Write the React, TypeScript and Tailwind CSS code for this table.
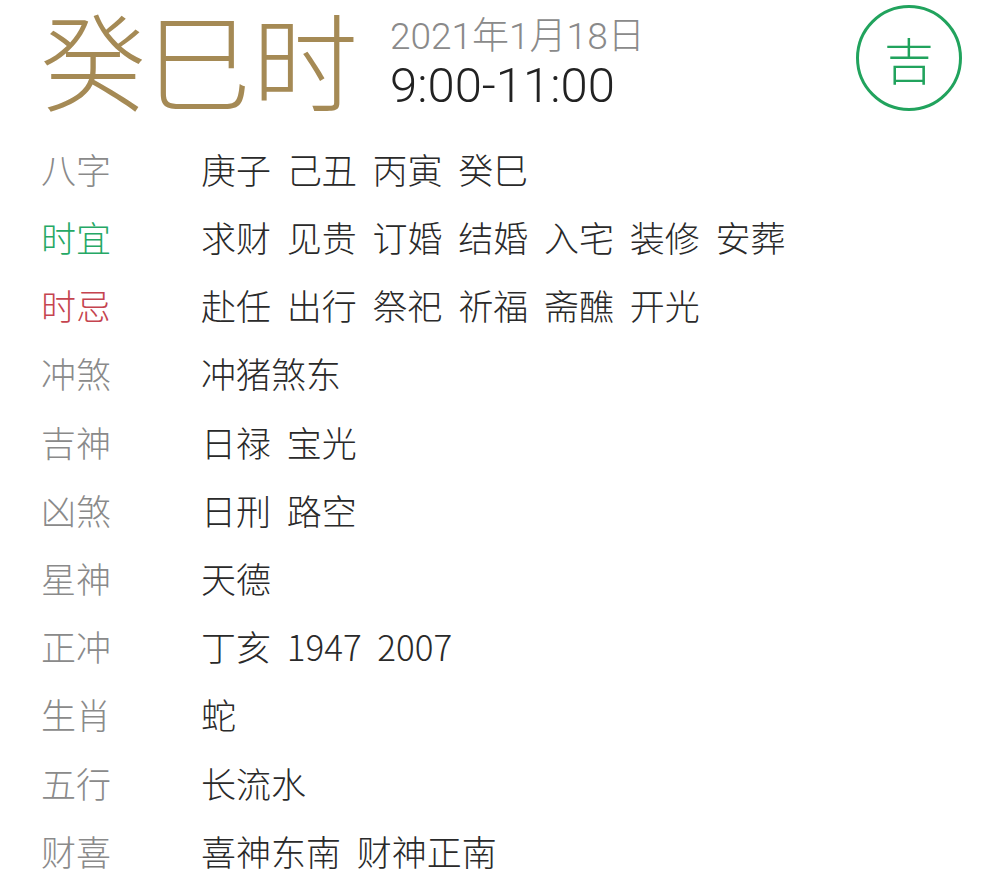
const rows: { label: string; value: string; tone?: "good" | "bad" }[] = [
  { label: "八字", value: "庚子 己丑 丙寅 癸巳" },
  { label: "时宜", value: "求财 见贵 订婚 结婚 入宅 装修 安葬", tone: "good" },
  { label: "时忌", value: "赴任 出行 祭祀 祈福 斋醮 开光", tone: "bad" },
  { label: "冲煞", value: "冲猪煞东" },
  { label: "吉神", value: "日禄 宝光" },
  { label: "凶煞", value: "日刑 路空" },
  { label: "星神", value: "天德" },
  { label: "正冲", value: "丁亥 1947 2007" },
  { label: "生肖", value: "蛇" },
  { label: "五行", value: "长流水" },
  { label: "财喜", value: "喜神东南 财神正南" },
];

const font = "font-['Noto_Sans_CJK_SC','Noto_Sans',sans-serif]";

export default function App() {
  return (
    <div className={`w-[1000px] h-[890px] bg-white overflow-hidden ${font}`}>
      {/* header */}
      <div className="flex items-center h-[114px] pl-[40px] pr-[38px]">
        <div className="text-[106px] leading-[110px] font-light text-[#a58a55]">癸巳时</div>
        <div className="flex flex-col ml-[32px] mt-[14px]">
          <span className="text-[37px] leading-[44px] font-light text-[#8a8a8a] font-['Roboto','Noto_Sans_CJK_SC',sans-serif]">
            2021年1月18日
          </span>
          <span className="text-[49px] leading-[54px] font-light text-[#222] font-['Roboto','Noto_Sans_CJK_SC',sans-serif]">
            9:00-11:00
          </span>
        </div>
        <div className="ml-auto mt-[2px] w-[106px] h-[106px] rounded-full border-[3px] border-[#21a35d] flex items-center justify-center">
          <span className="text-[50px] leading-none text-[#21a35d] font-light">吉</span>
        </div>
      </div>

      {/* detail rows */}
      <div className="flex flex-col pl-[41px] mt-[21px]">
        {rows.map((r) => (
          <div key={r.label} className="flex items-center h-[68.2px] text-[35px] font-light">
            <span
              className={
                "w-[160px] " +
                (r.tone === "good" ? "text-[#25a865]" : r.tone === "bad" ? "text-[#c5444f]" : "text-[#8a8a8a]")
              }
            >
              {r.label}
            </span>
            <span className="text-[#2a2a2a] whitespace-pre [word-spacing:8px]">{r.value}</span>
          </div>
        ))}
      </div>
    </div>
  );
}
